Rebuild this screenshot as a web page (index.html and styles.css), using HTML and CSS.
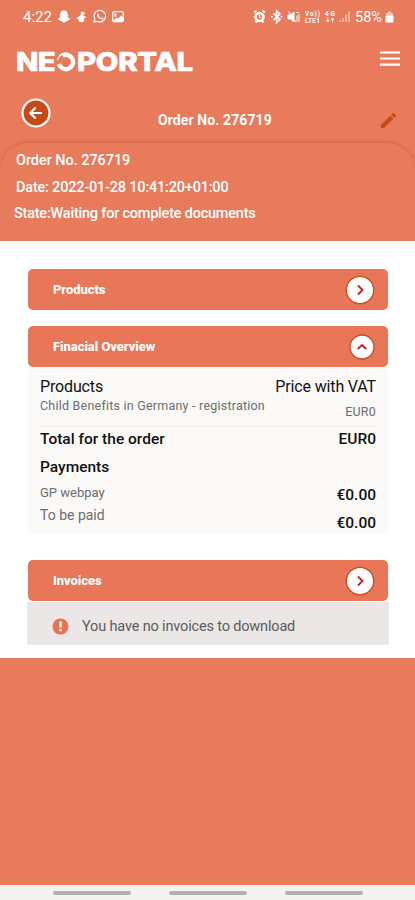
FILE: index.html
```html
<!DOCTYPE html>
<html lang="en">
<head>
<meta charset="utf-8">
<meta name="viewport" content="width=device-width">
<title>Neoportal - Order No. 276719</title>
<link rel="stylesheet" href="styles.css">
</head>
<body>
<div class="screen">
  <header class="status">
    <span class="clock">4:22</span>
    <svg class="status-left" width="70" height="16" viewBox="0 0 70 16" fill="#fff">
      <path d="M7 1.500c2.500 0 3.700 1.600 3.600 4l1.100.3-1.200 1.100c.5 1.600 1.600 2.500 2.800 3-.3.9-1.300 1-2.100 1.200l-.4 1-1.800.1C8.100 13 7.700 13.500 7 13.500s-1.100-.5-2-1.300l-1.800-.1-.4-1C2 10.900 1 10.800.7 9.900c1.200-.5 2.300-1.400 2.800-3L2.300 5.800l1.100-.3c-.1-2.400 1.100-4 3.600-4z"/>
      <path d="M24.500 2.500c2 0 4 1 3.300 2.500-.4 1-1.600 1-1.800 1.700.9.200 3 .3 3.400 1.900-.8.400-1.800.1-2.600.3 1 1.300.8 3.700-1.600 4.200-2.500.4-4-1-3.800-2.800l-2-.6c.5-1.600 2.700-1.800 4-3.200.8-1 .3-2.800 1.100-4z"/>
      <path d="M37 13l.8-2.800A5.800 5.800 0 1 1 40 12.300z" fill="none" stroke="#fff" stroke-width="1.200"/>
      <path d="M41.300 4.500l.8 2c-.6.700-.2 1.400 1.700 2.500l1-.8 1.700 1c-.7 2-3 1.500-4.500.2-1.900-1.700-2.600-4-.7-4.900z"/>
      <rect x="55.700" y="2.700" width="10.600" height="10" rx="1.500" fill="none" stroke="#fff" stroke-width="1.300"/>
      <path d="M56.500 12l2.800-3.500 1.700 1.200L64 6.500l2 2V12zM57.500 4.500h2v3h-2z"/>
    </svg>
    <span class="grow"></span>
    <svg class="status-right" width="101" height="16" viewBox="0 0 101 16" fill="none" stroke="#fff">
      <path d="M1 3.500l2.500-1.800M12 3.500L9.500 1.700M2.500 13.500l1.500-1.800M10.500 13.500L9 11.700" stroke-width="2"/>
      <circle cx="6.500" cy="8" r="4" stroke-width="2.600"/>
      <path d="M6.500 5.500V8.500H8.500"/>
      <path d="M20.500 4.500l6.500 6-3.500 3V2l3.500 3-6.500 6M18 7.700h2M27.500 7.700h2" stroke-width="1.500"/>
      <path d="M35 6h2.500L41 3v10L37.500 10H35z" fill="#fff"/>
      <path d="M35 2l8 11M43 3.500h3M44 6.500v6M46 5v8"/>
      <g class="tiny" fill="#fff" stroke="none">
        <text x="52" y="7.200" textLength="15">Vo))</text><text x="52" y="13.500" textLength="15">LTE1</text>
        <text x="72" y="7.200" textLength="10">4G</text>
      </g>
      <path d="M74.800 8.500v4M73.300 11l1.500 2 1.500-2M79.500 13.500v-4M78 11l1.500-2 1.500 2" />
      <path d="M87 13v-2M90 13V9M93 13V5.500M96 13V2.500" stroke-width="1.300" opacity=".65"/>
    </svg>
    <span class="battery-text">58%</span>
    <svg class="battery" width="9" height="16" viewBox="0 0 9 16"><path d="M3 2.500h3V4h2v3H1V4h2z" fill="#fff" opacity=".55"/><rect x=".5" y="6.500" width="8" height="7" rx="1" fill="#fff"/></svg>
  </header>

  <div class="brand">
    <div class="logo"><span class="logo-ne">NE</span><svg class="logo-o" width="20" height="21" viewBox="0 0 20 21" fill="none" stroke="#fff"><path d="M3 13A7.200 7.200 0 1 0 6.500 4.600" stroke-width="4.400"/><path d="M1.500 8.800C3 4.500 7 1 12 2.500" stroke-width="1.500"/></svg><span class="logo-portal">PORTAL</span></div>
    <svg width="20" height="16" viewBox="0 0 20 16" stroke="#fff" stroke-width="2.200"><path d="M0 1.500h20M0 7.500h20M0 13.700h20"/></svg>
  </div>

  <div class="titlebar">
    <svg class="back" width="30" height="30" viewBox="0 0 30 30" fill="none" stroke="#fff"><circle cx="15" cy="15" r="13.500" fill="#c64a17" stroke-width="2.200"/><path d="M21 15H9.500M14.700 9.500L9.200 15l5.500 5.500" stroke-width="2.200"/></svg>
    <h1>Order No. 276719</h1>
    <svg class="edit" width="17" height="17" viewBox="0 0 18 18" fill="#c64a17"><path d="M1 13.700L10.800 3.900l3.300 3.300L4.300 17H1zM11.800 2.900l1.500-1.500c.4-.4 1-.4 1.400 0l1.900 1.900c.4.4.4 1 0 1.400l-1.500 1.500z"/></svg>
  </div>

  <section class="summary">
    <p class="s-number">Order No. 276719</p>
    <p class="s-date">Date: 2022-01-28 10:41:20+01:00</p>
    <p class="s-state">State:Waiting for complete documents</p>
  </section>

  <main>
    <div class="bar"><h2 class="h-products">Products</h2><svg width="30" height="30" viewBox="0 0 30 30"><circle cx="15" cy="15" r="13.700" fill="#fff" stroke="#cc4a1d" stroke-width="1.300"/><path d="M13 10.500l4.500 4.500-4.500 4.500" fill="none" stroke="#c5202a" stroke-width="1.900"/></svg></div>
    <div class="bar bar-open"><h2 class="h-finance">Finacial Overview</h2><svg width="26" height="26" viewBox="0 0 26 26"><circle cx="13" cy="13" r="12" fill="#fff" stroke="#cc4a1d" stroke-width="1.300"/><path d="M8.800 15l4.200-4 4.200 4" fill="none" stroke="#c5202a" stroke-width="1.900"/></svg></div>
    <div class="overview">
      <div class="products">
        <div class="row head"><span class="t-products">Products</span><span class="t-price">Price with VAT</span></div>
        <div class="row item"><span class="t-item">Child Benefits in Germany - registration</span><span class="t-eur">EUR0</span></div>
      </div>
      <div class="row total"><span class="t-total">Total for the order</span><span class="t-sum">EUR0</span></div>
      <div class="row payments"><span class="t-payments">Payments</span></div>
      <div class="row pay"><span class="label t-gp">GP webpay</span><span class="amount">€0.00</span></div>
      <div class="row paid"><span class="label t-paid">To be paid</span><span class="amount amount-due">€0.00</span></div>
    </div>
    <div class="bar bar-invoices"><h2 class="h-invoices">Invoices</h2><svg width="30" height="30" viewBox="0 0 30 30"><circle cx="15" cy="15" r="13.700" fill="#fff" stroke="#cc4a1d" stroke-width="1.300"/><path d="M13 10.500l4.500 4.500-4.500 4.500" fill="none" stroke="#c5202a" stroke-width="1.900"/></svg></div>
    <div class="notice"><svg width="17" height="17" viewBox="0 0 17 17"><circle cx="8.500" cy="8.500" r="8" fill="#e9734f"/><path d="M8.500 3.500v6M8.500 11v2.300" stroke="#fff" stroke-width="2.400"/></svg><span>You have no invoices to download</span></div>
  </main>
  <div class="filler"></div>
  <footer><i></i><i></i><i></i></footer>
</div>
</body>
</html>
```
FILE: styles.css
```css
* { box-sizing: border-box; }
body, h1, h2, p { margin: 0; }
body { font-family: Roboto, "Liberation Sans", sans-serif; background: #e87b5c; }
svg { display: block; flex: none; }
span, h1, h2, p { white-space: nowrap; }
.screen { width: 415px; height: 900px; display: flex; flex-direction: column; overflow: hidden; background: #e87b5c; color: #fff; }
.status { height: 34px; display: flex; align-items: center; padding: 0 21px 0 23px; font-size: 15px; flex: none; }
.clock { width: 29px; }
.status-left { margin-left: 5px; }
.grow { flex: 1; }
.tiny { font: bold 6.5px Roboto, sans-serif; }
.battery-text { font-size: 14.5px; margin-left: 1px; width: 29px; }
.battery { margin-left: 1px; }

.brand { height: 56px; flex: none; display: flex; justify-content: space-between; align-items: flex-start; padding: 16px 15px 0 16px; }
.brand > svg { margin-top: 1px; }
.logo { display: flex; align-items: center; height: 23px; font: 800 26px/23px Inter, "Open Sans", sans-serif; }
.logo span { transform: scaleX(1.13); transform-origin: 0 50%; -webkit-text-stroke: .6px #fff; }
.logo-ne { width: 40px; letter-spacing: -.6px; }
.logo-o { margin: 0 1px 0 0; }
.logo-portal { letter-spacing: -.3px; }

.titlebar { height: 52px; flex: none; display: flex; align-items: flex-start; padding: 8px 18px 0 21px; }
.titlebar h1 { font-size: 14px; line-height: 20px; font-weight: 700; letter-spacing: .1px; margin: 12px auto 0 107px; }
.edit { margin-top: 14px; }

.summary { height: 99px; flex: none; border-top: 1px solid #db6c4c; border-radius: 28px 28px 0 0; box-shadow: 0 -1px 3px rgba(196, 80, 48, .35); padding: 5px 16px 0; font-size: 14.5px; line-height: 26.500px; font-weight: 500; }
.s-number { letter-spacing: -.06px; }
.s-date { letter-spacing: -.2px; }
.s-state { margin-left: -2px; letter-spacing: -.22px; }

main { height: 417px; flex: none; background: #fff; padding: 28px 26px 0 27px; color: #111; }
.bar { height: 41px; margin: 0 1px 16px; border-radius: 5px; background: #e87759; color: #fff; display: flex; align-items: center; justify-content: space-between; padding: 0 13px 0 25px; }
.bar h2 { font-size: 13px; font-weight: 800; letter-spacing: -.05px; }
.bar-open { margin-bottom: 0; }
.overview { margin: 0 1px; height: 167px; background: #fbfaf9; padding: 10px 12px 0; }
.row { display: flex; justify-content: space-between; }
.products { height: 50px; border-bottom: 1px solid #f2f0ee; }
.head { font-size: 16px; line-height: 19px; letter-spacing: -.15px; }
.item { font-size: 12.500px; line-height: 20px; color: #6c6c6c; }
.t-item { letter-spacing: .22px; }
.t-eur { margin-top: 6px; letter-spacing: .2px; }
.total { font-size: 15.500px; line-height: 24px; font-weight: 500; }
.payments { font-size: 15.500px; line-height: 32px; font-weight: 500; }
.label { color: #6c6c6c; }
.pay, .paid { line-height: 20px; font-size: 13px; height: 23px; }
.paid { font-size: 14px; }
.t-paid { margin-top: -1px; }
.amount { font-size: 15.500px; font-weight: 500; color: #111; margin-top: 2px; }
.amount-due { margin-top: 7px; }
.bar-invoices { margin: 26px 1px 1px; }
.notice { height: 43px; border-radius: 2px; background: #ebe7e6; color: #5b5b5b; font-size: 14.500px; letter-spacing: -.16px; display: flex; align-items: center; padding: 5px 25px 0; gap: 13px; }

.filler { flex: 1; }
footer { height: 15px; flex: none; background: #f3f3f2; display: grid; grid-template-columns: repeat(3, 78px); gap: 38px; padding: 6px 0 0 53px; }
footer i { height: 4px; border-radius: 2px; background: #b0b0b0; }
```
